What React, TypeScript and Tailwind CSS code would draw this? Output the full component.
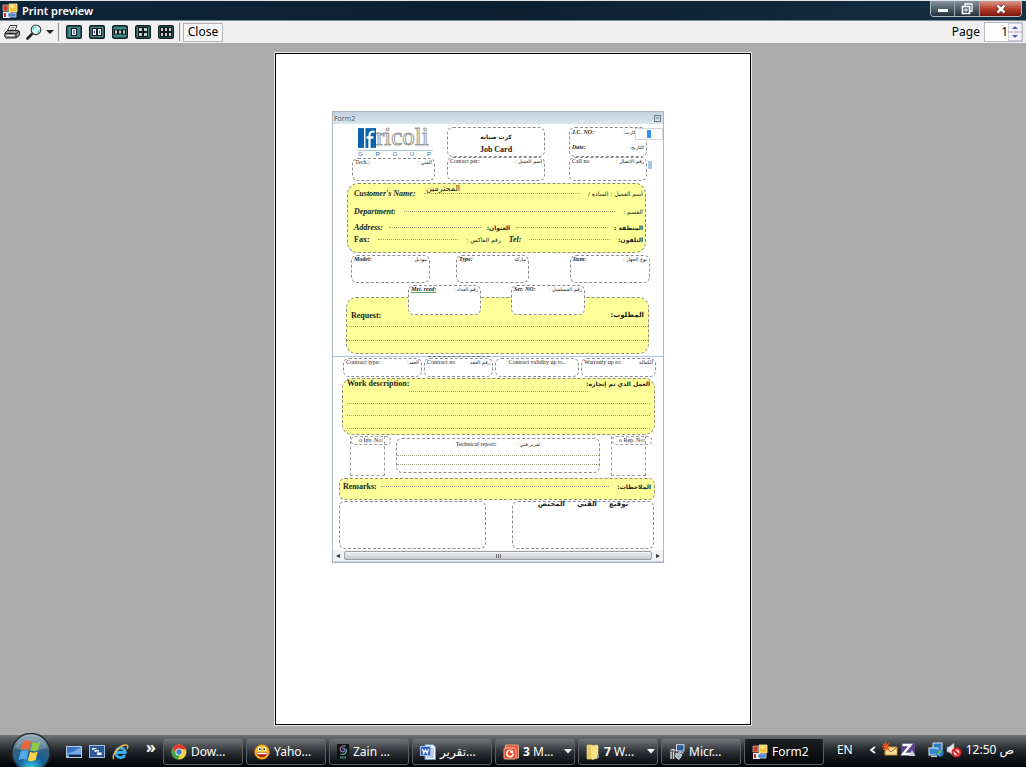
import { ReactNode } from "react";

const ARABIC = "font-['DejaVu_Sans',sans-serif]";

function Ar({ children, className = "" }: { children: ReactNode; className?: string }) {
  return (
    <span dir="rtl" lang="ar" className={`${ARABIC} whitespace-nowrap ${className}`}>
      {children}
    </span>
  );
}

function Dots() {
  return <span className="h-0 min-w-0 flex-1 border-t border-dotted border-[#a3a384]" />;
}

function Box({ children, className = "" }: { children?: ReactNode; className?: string }) {
  return <div className={`rounded-md border border-dashed border-[#8c8c8c] ${className}`}>{children}</div>;
}

function Field({ label, arabic, className = "", text = "" }: { label: string; arabic: string; className?: string; text?: string }) {
  return (
    <Box className={className}>
      <div className="flex justify-between px-0.5 text-[6px] leading-[7px]">
        <span className={`whitespace-nowrap ${text}`}>{label}</span>
        <Ar className="text-[5px]">{arabic}</Ar>
      </div>
    </Box>
  );
}

function FormsIcon() {
  return (
    <svg viewBox="0 0 16 16" className="h-4 w-4 shrink-0" aria-hidden="true">
      <path d="M1 9h7v6H1z" fill="#e9eef5" />
      <path d="M1 2h5v6H1z" fill="#c63d1d" stroke="#f0d8c8" strokeWidth=".6" />
      <path d="M7 1h8v8H7z" fill="#f6c33c" stroke="#fff0b5" strokeWidth=".8" />
      <path d="M8.500 2.500h4v2h-4z" fill="#fff0a5" />
      <path d="M2 10h2v4H2z" fill="#b93427" />
      <path d="M6 10h8v4H6z" fill="#5482cf" stroke="#c9dcf9" strokeWidth=".8" />
    </svg>
  );
}

function PagesIcon({ cols, rows, wide }: { cols: number; rows: number; wide?: boolean }) {
  const cells: ReactNode[] = [];
  const w = cols === 1 ? 5 : cols === 2 ? 4 : 3;
  const h = rows === 2 ? 4 : wide ? 7 : 4;
  const step = w + 1;
  const x0 = 8 - (cols * step - 1) / 2;
  const y0 = 7 - (rows * (h + 1) - 1) / 2;
  for (let r = 0; r < rows; r++)
    for (let c = 0; c < cols; c++) {
      const x = x0 + c * step;
      const y = y0 + r * (h + 1);
      cells.push(
        <g key={`${r}-${c}`}>
          <rect x={x} y={y} width={w} height={h} fill={wide ? "#f6f3ff" : "#c9cfcb"} stroke="#141c20" strokeWidth="1" />
          {wide && <path d={`M${x + w / 2} ${y + 2}v3`} stroke="#5a49a8" strokeWidth="1" />}
          {cols === 1 && <path d={`M${x + 1.5} ${y + 2}h2M${x + 1.5} ${y + 5}h2`} stroke="#5a49a8" strokeWidth=".8" />}
        </g>
      );
    }
  return (
    <svg viewBox="0 0 16 14" className="h-[14px] w-4" aria-hidden="true">
      <rect x=".7" y=".7" width="14.600" height="12.600" rx="1.500" fill="#3c8784" stroke="#101a1c" strokeWidth="1.400" />
      {cells}
    </svg>
  );
}

function PrinterIcon() {
  return (
    <svg viewBox="0 0 16 16" className="h-4 w-4" aria-hidden="true">
      <path d="M6 1.500h7L11 7H3.500z" fill="#fff" stroke="#333" />
      <path d="M6.500 3.500h4M5.800 5.200h4" stroke="#666" strokeWidth=".8" />
      <path d="M1 9l2.500-2.500H14l1.500 1V11l-3 3H1.800L.8 12.500z" fill="#8f8f8f" stroke="#222" />
      <path d="M1 9.500h11l3-2.500M12 9.500V14" stroke="#222" fill="none" />
      <path d="M2.500 11.500h8" stroke="#fff" />
      <path d="M9 8h3" stroke="#e2d34c" />
    </svg>
  );
}

function MagnifierIcon() {
  return (
    <svg viewBox="0 0 16 16" className="h-4 w-4" aria-hidden="true">
      <path d="M6.500 9.500L1.500 14.500" stroke="#222" strokeWidth="2.600" strokeLinecap="round" />
      <circle cx="10" cy="5.800" r="4.800" fill="#d7fafa" stroke="#333" strokeWidth="1.100" />
      <path d="M7 6a3 3 0 013-3M11 9a3 3 0 002-3" stroke="#2dd6de" strokeWidth="1.200" fill="none" />
    </svg>
  );
}

function ChromeIcon() {
  return (
    <svg viewBox="0 0 16 16" className="h-4 w-4 shrink-0" aria-hidden="true">
      <circle cx="8" cy="8" r="7.500" fill="#f3cf35" />
      <path d="M1.500 4.200A7.500 7.500 0 0115 5.200H8L5 9.500z" fill="#df3a2c" />
      <path d="M1.500 4.200L5 10l4 1-2 4.400A7.500 7.500 0 011.500 4.200z" fill="#3fa648" />
      <circle cx="8" cy="8" r="3.500" fill="#fff" />
      <circle cx="8" cy="8" r="2.700" fill="#3f7ccb" />
    </svg>
  );
}

function SmileyIcon() {
  return (
    <svg viewBox="0 0 16 16" className="h-4 w-4 shrink-0" aria-hidden="true">
      <circle cx="8" cy="8" r="7.300" fill="#fac52c" stroke="#cf7a10" strokeWidth=".8" />
      <ellipse cx="5.500" cy="5" rx="1.700" ry="2.300" fill="#fff" />
      <ellipse cx="10.500" cy="5" rx="1.700" ry="2.300" fill="#fff" />
      <circle cx="5.800" cy="5.200" r=".9" fill="#222" />
      <circle cx="10.200" cy="5.200" r=".9" fill="#222" />
      <path d="M2.500 8.500h11a5.500 5 0 01-11 0z" fill="#b21c16" />
      <path d="M3 8.800h10l-.5 1.500h-9z" fill="#fff" />
    </svg>
  );
}

function ZainIcon() {
  return (
    <svg viewBox="0 0 12 16" className="h-4 w-3 shrink-0" aria-hidden="true">
      <rect width="12" height="16" fill="#101416" />
      <path d="M8.500 2C4 1 2 5 4 7c1 1.500 4 .5 4-1.500S6 4 5.500 5.500" stroke="#8a72a6" fill="none" strokeWidth="1.300" />
      <path d="M3.500 10c4 1.500 7-2 5.500-5" stroke="#54a69b" fill="none" strokeWidth="1.300" />
      <path d="M3 13.500h6" stroke="#49a08f" strokeDasharray="1.200 .5" strokeWidth="1.800" />
    </svg>
  );
}

function WordIcon() {
  return (
    <svg viewBox="0 0 16 16" className="h-4 w-4 shrink-0" aria-hidden="true">
      <path d="M5 .5h8l2.500 2.500v12.500H5z" fill="#f4f8ff" stroke="#6d93cf" />
      <path d="M11 5h3M11 7h3M11 9h3M7 11h7M7 13h7" stroke="#7fa3dc" />
      <rect x=".5" y="2.500" width="10" height="9" fill="#2c5fb5" stroke="#9dbdea" />
      <path d="M2.500 5l1.300 4.200L5.500 6l1.700 3.200L8.500 5" stroke="#fff" strokeWidth="1.300" fill="none" />
    </svg>
  );
}

function PptIcon() {
  return (
    <svg viewBox="0 0 16 16" className="h-4 w-4 shrink-0" aria-hidden="true">
      <path d="M2.500 1h13v13h-3V4h-10z" fill="#e95128" stroke="#ffc4aa" strokeWidth=".7" />
      <rect x="1" y="4" width="12" height="11" rx="1" fill="#e7492a" stroke="#ffd1bd" strokeWidth=".8" />
      <circle cx="7" cy="9.500" r="3.200" fill="none" stroke="#fff" strokeWidth="1.500" />
      <path d="M7 9.500V6h3.500v3.500z" fill="#fff" stroke="#e7492a" strokeWidth=".7" />
    </svg>
  );
}

function FolderIcon() {
  return (
    <svg viewBox="0 0 14 16" className="h-4 w-3.5 shrink-0" aria-hidden="true">
      <path d="M1 1h5l1 1.500V15H1z" fill="#e7c85c" stroke="#fae99d" strokeWidth=".6" />
      <path d="M5 2l6-1 1 1v12l-6 1.500z" fill="#f7df82" stroke="#fff0ad" strokeWidth=".6" />
      <path d="M11 11h2v3h-2z" fill="#67a0c9" />
    </svg>
  );
}

function StudioIcon() {
  return (
    <svg viewBox="0 0 16 16" className="h-4 w-4 shrink-0" aria-hidden="true">
      <rect x="7.500" y=".7" width="7.500" height="6.300" fill="#2c5c99" stroke="#d5dce4" />
      <path d="M9 8.800h5.500M11.200 7v2" stroke="#bcc5cf" strokeWidth="1.200" />
      <path d="M.8 6.500C2 4.500 5 4 7 6.500L5.500 7.500 4 6.500z" fill="#c9cdd0" />
      <path d="M2 7.500v7.500M4.500 7.500V15" stroke="#d5d8da" strokeWidth="1.500" />
      <path d="M7 9l6 2-3 4.500-3.500-2.500z" fill="#93b4c4" stroke="#e2e6e9" strokeWidth=".9" />
    </svg>
  );
}

function DesktopIcon() {
  return (
    <svg viewBox="0 0 16 16" className="h-4 w-4" aria-hidden="true">
      <rect x=".5" y="2.500" width="15" height="11" fill="#3a75c6" stroke="#b9cbe0" />
      <path d="M1 9C6 9 10 6 15 3v7H1z" fill="#79a8df" />
      <path d="M1 12h14" stroke="#17253a" strokeWidth="2" />
      <path d="M1 12h2" stroke="#4fb4e4" strokeWidth="2" />
    </svg>
  );
}

function SwitcherIcon() {
  return (
    <svg viewBox="0 0 16 16" className="h-4 w-4" aria-hidden="true">
      <rect x=".5" y="1.500" width="15" height="12" fill="#2b599a" stroke="#9ebbe0" />
      <path d="M2.500 3.500h5.500v3H2.500z" fill="#dce9f8" stroke="#1b3c70" strokeWidth=".7" />
      <path d="M5 5.500h5.500v3H5z" fill="#dce9f8" stroke="#1b3c70" strokeWidth=".7" />
      <path d="M7.500 8h5.500v3.500H7.500z" fill="#f3f8fe" stroke="#1b3c70" strokeWidth=".7" />
    </svg>
  );
}

function ExplorerIcon() {
  return (
    <svg viewBox="0 0 17 16" className="h-4 w-[17px]" aria-hidden="true">
      <path d="M12.800 11A4.800 4.800 0 1113.300 8.500H4.500" fill="none" stroke="#3aaef0" strokeWidth="2.800" />
      <path d="M2 15C-1 12 6 2 13 1c4-.5 3 2.500 2 4" fill="none" stroke="#f0c244" strokeWidth="1.300" />
    </svg>
  );
}

function StartOrb() {
  return (
    <svg viewBox="0 0 42 34" className="h-[34px] w-[42px]" aria-hidden="true">
      <defs>
        <radialGradient id="orb" cx=".5" cy=".9" r=".85">
          <stop offset="0" stopColor="#35c6ef" />
          <stop offset=".4" stopColor="#165d91" />
          <stop offset=".75" stopColor="#3b647f" />
          <stop offset="1" stopColor="#9fb3c0" />
        </radialGradient>
      </defs>
      <circle cx="21" cy="19.500" r="19" fill="url(#orb)" stroke="#202a32" strokeWidth="1.500" />
      <path d="M5 15a16.500 13 0 0132 0c-10 4-22 4-32 0z" fill="#fff" opacity=".22" />
      <path d="M13 9c3-2 5-2 8-.5L19 17c-3-1.500-5-1.300-8 .2z" fill="#ee6335" />
      <path d="M22.500 9c3 1.300 5 1.200 8-.4L28 17c-3 1.600-5 1.500-7.700.3z" fill="#91c945" />
      <path d="M10.500 18.500c3-1.500 5-1.500 8-.2L16.500 27c-3-1.500-5-1.500-8 .2z" fill="#55a9e5" />
      <path d="M20 18.700c3 1.300 5 1.300 7.800-.2L25.500 27c-3 1.500-5 1.500-7.700.2z" fill="#fcd044" />
    </svg>
  );
}

function Task({ icon, label, active, menu, count }: { icon: ReactNode; label: string; active?: boolean; menu?: boolean; count?: string }) {
  return (
    <button
      className={`flex h-[27px] w-20 items-center gap-1 rounded-[3px] border pl-[7px] text-left text-[12px] text-white ${
        active
          ? "border-[#5c5e60] bg-linear-to-b from-[#1c1e20] to-[#050607]"
          : "border-[#5e6164] bg-linear-to-b from-[#73777a] via-[#303438] via-50% to-[#080c10]"
      }`}
    >
      {icon}
      <span className="min-w-0 flex-1 whitespace-nowrap">
        {count && <b>{count} </b>}
        {label}
      </span>
      {menu && (
        <svg viewBox="0 0 8 5" className="mr-0.5 h-[5px] w-2 shrink-0" aria-hidden="true">
          <path d="M0 0h8L4 4.500z" fill="#fff" />
        </svg>
      )}
    </button>
  );
}

function TitleBar() {
  return (
    <header className="flex h-[21px] items-start border-t border-b border-t-[#dfe5ea] border-b-[#7d8b95] bg-linear-to-r from-[#0e2439] via-[#0c2032] to-[#152f42] pr-1 pl-0.5">
      <div className="flex h-[19px] items-center gap-1">
        <FormsIcon />
        <h1 className="text-[11px] leading-[18px] font-semibold text-white">Print preview</h1>
      </div>
      <div className="ml-auto flex h-4 overflow-hidden rounded-b border border-t-0 border-[#aebac4]">
        <button aria-label="Minimize" className="flex w-6 items-end justify-center border-r border-[#9aa7b2] bg-linear-to-b from-[#8793a0] to-[#25313e] pb-1">
          <span className="h-[3px] w-2.5 bg-white" />
        </button>
        <button aria-label="Restore" className="flex w-[25px] items-center justify-center border-r border-[#9aa7b2] bg-linear-to-b from-[#8793a0] to-[#25313e]">
          <svg viewBox="0 0 12 12" className="h-3 w-3" aria-hidden="true">
            <path d="M4 3V1h7v7H9" fill="none" stroke="#fff" strokeWidth="1.300" />
            <path d="M1.500 3.500h7v7h-7z" fill="none" stroke="#fff" strokeWidth="1.700" />
            <path d="M4 6h2v2H4z" fill="none" stroke="#fff" />
          </svg>
        </button>
        <button aria-label="Close window" className="flex w-[41px] items-center justify-center bg-linear-to-b from-[#d5988c] via-[#b8402f] to-[#7a160c]">
          <svg viewBox="0 0 12 10" className="h-2.5 w-3" aria-hidden="true">
            <path d="M2.500 1.500l7 7M9.500 1.500l-7 7" stroke="#50201b" strokeWidth="4" />
            <path d="M2.500 1.500l7 7M9.500 1.500l-7 7" stroke="#fff" strokeWidth="2.500" />
          </svg>
        </button>
      </div>
    </header>
  );
}

function Toolbar() {
  return (
    <div role="toolbar" className="flex h-[22px] items-center bg-[#f0f0f0] pr-[3px] pl-1 text-[12px] text-black">
      <button aria-label="Print"><PrinterIcon /></button>
      <button aria-label="Zoom" className="ml-1.5 flex items-center gap-1">
        <MagnifierIcon />
        <svg viewBox="0 0 8 4" className="h-1 w-2" aria-hidden="true"><path d="M0 0h8L4 4z" fill="#222" /></svg>
      </button>
      <span className="mr-[7px] ml-1 h-[18px] w-px bg-[#8a8a8a]" />
      <div className="flex gap-[7px]">
        <button aria-label="One page"><PagesIcon cols={1} rows={1} wide /></button>
        <button aria-label="Two pages"><PagesIcon cols={2} rows={1} wide /></button>
        <button aria-label="Three pages"><PagesIcon cols={3} rows={1} /></button>
        <button aria-label="Four pages"><PagesIcon cols={2} rows={2} /></button>
        <button aria-label="Six pages"><PagesIcon cols={3} rows={2} /></button>
      </div>
      <span className="mr-[3px] ml-[5px] h-[18px] w-px bg-[#8a8a8a]" />
      <button className="h-[19px] w-10 border border-[#b4b4b4] bg-[#f7f7f7] leading-4">Close</button>
      <label htmlFor="page" className="ml-auto">Page</label>
      <div className="ml-1 flex h-5 w-[39px] border border-[#b5bac4] bg-white">
        <input id="page" defaultValue="1" className="w-[23px] min-w-0 bg-white text-right outline-none" />
        <div className="flex flex-1 flex-col">
          <button aria-label="Next page" className="flex flex-1 items-center justify-center border border-[#cdd0d5] bg-[#f5f5f7]">
            <svg viewBox="0 0 6 3" className="h-[3px] w-1.5" aria-hidden="true"><path d="M0 3h6L3 0z" fill="#4866b5" /></svg>
          </button>
          <button aria-label="Previous page" className="flex flex-1 items-center justify-center border border-[#cdd0d5] bg-[#f5f5f7]">
            <svg viewBox="0 0 6 3" className="h-[3px] w-1.5" aria-hidden="true"><path d="M0 0h6L3 3z" fill="#4866b5" /></svg>
          </button>
        </div>
      </div>
    </div>
  );
}

function Logo() {
  return (
    <div className="w-[75px]">
      <div className="flex h-6 items-start border-b border-[#a9c6e2]">
        <svg viewBox="0 0 18 20" className="h-[22px] w-[18px] shrink-0" preserveAspectRatio="none" aria-hidden="true">
          <path d="M0 1h6v18H0z" fill="#0a62ad" />
          <path d="M7.500 1H18v18H7.500z" fill="#0a62ad" />
          <path d="M16.500 4.500c-3.500-1-5 .3-5 3.500v11M8.500 9.500h7" stroke="#fff" strokeWidth="2.200" fill="none" />
        </svg>
        <span className="font-['Liberation_Serif',serif] text-[25px] leading-[20px] text-white [-webkit-text-stroke:1px_#9a9a9a]">ricoli</span>
      </div>
      <div className="flex justify-between pr-0.5 font-['Liberation_Sans',sans-serif] text-[6px] leading-[7px] text-[#2c6ca8]">
        <span>G</span><span>R</span><span>O</span><span>U</span><span>P</span>
      </div>
    </div>
  );
}

function Report() {
  return (
    <section className="w-[332px] border border-[#aab6c2] bg-white font-['Liberation_Serif',serif] text-[8px] leading-[9px] text-[#222]">
      <div className="flex h-3 items-center justify-between bg-linear-to-b from-[#c2d0df] to-[#dbe5f0] pr-0.5 pl-px font-['Open_Sans',sans-serif] text-[7px] text-[#4b5663]">
        <span>Form2</span>
        <button aria-label="Close form" className="flex h-[7px] w-[7px] items-center justify-center border border-[#6c7684] text-[6px] leading-none">×</button>
      </div>

      <div className="mt-[3px] flex h-[30px] pl-[25px]">
        <Logo />
        <Box className="ml-3.5 flex h-[30px] w-[98px] flex-col items-center gap-1 pt-1 font-bold">
          <Ar className="text-[6px]">كرت صيانة</Ar>
          <span>Job Card</span>
        </Box>
        <Box className="relative ml-6 flex h-[30px] w-[78px] flex-col gap-2 px-0.5 pt-px text-[6px] leading-[7px] font-bold italic">
          <div className="flex justify-between"><span>J.C. NO:</span><Ar className="mr-2 text-[5px] font-normal not-italic">كارت:</Ar></div>
          <div className="flex justify-between"><span>Date:</span><Ar className="text-[5px] font-normal not-italic">التاريخ:</Ar></div>
          <span className="absolute top-0 left-[65px] flex h-3 w-[28px] items-center justify-center border border-[#d3d8df] bg-white">
            <span className="h-2 w-1 bg-[#3391f5]" />
          </span>
        </Box>
      </div>

      <div className="flex pl-[19px]">
        <Field label="Tech.:" arabic="الفني :" className="mt-px h-[23px] w-[83px]" />
        <Field label="Contact per:" arabic="اسم العميل :" className="ml-3 h-6 w-[98px]" />
        <Field label="Call no" arabic="رقم الاتصال :" className="ml-6 h-6 w-[78px]" />
        <span className="mt-1 ml-px h-2 w-1 bg-[#a5c8ef]" />
      </div>

      <div className="mt-0.5 mr-[17px] ml-3.5 flex h-[70px] flex-col rounded-[11px] border border-dashed border-[#8c8c8c] bg-[#ffff99] pr-0.5 pl-1.5 font-bold">
        <div className="relative flex h-[18px] items-center gap-2">
          <i>Customer&apos;s Name:</i><Dots /><Ar className="text-[6px] font-normal">اسم العميل : السادة /</Ar>
          <Ar className="absolute top-0 left-[72px] text-[8px] font-normal">المحترمين</Ar>
        </div>
        <div className="flex h-[18px] items-center gap-2"><i>Department:</i><Dots /><Ar className="text-[6px] font-normal">القسم :</Ar></div>
        <div className="flex h-[15px] items-center gap-1.5"><i>Address:</i><Dots /><Ar className="text-[6px]">العنوان:</Ar><Dots /><Ar className="text-[6px]">المنطقة :</Ar></div>
        <div className="flex h-2 items-center gap-2"><span>Fax:</span><Dots /><Ar className="text-[6px] font-normal">رقم الفاكس :</Ar><i>Tel:</i><Dots /><Ar className="text-[6px]">التلفون:</Ar></div>
      </div>

      <div className="mt-0.5 flex pl-[18px]">
        <Field label="Model:" arabic="موديل :" className="h-7 w-[79px]" text="font-bold italic" />
        <Field label="Type:" arabic="ماركة" className="ml-[26px] h-7 w-[73px]" text="font-bold italic" />
        <Field label="Item:" arabic="نوع الجهاز :" className="ml-[41px] h-7 w-20" text="font-bold italic" />
      </div>

      <div className="relative z-10 mt-0.5 flex pl-[75px]">
        <Field label="Met. reed:" arabic="رقم العداد :" className="h-[30px] w-[73px] bg-white" text="font-bold italic underline decoration-[#5aa05a]" />
        <Field label="Ser. NO:" arabic="رقم المسلسل :" className="ml-[30px] h-[30px] w-[74px] bg-white" text="font-bold italic" />
      </div>

      <div className="mt-[-18px] mr-3.5 ml-[13px] h-[57px] rounded-[10px] border border-dashed border-[#8c8c8c] bg-[#ffff99] font-bold">
        <div className="flex h-7 items-end justify-between px-1 pb-1.5"><span>Request:</span><Ar className="text-[7px]">المطلوب:</Ar></div>
        <div className="flex"><Dots /></div>
        <div className="mt-[13px] flex"><Dots /></div>
      </div>

      <div className="mt-0.5 flex h-px bg-[#a9c4e6]"><span className="ml-[95px] w-[62px] border-t border-dashed border-[#626b76]" /></div>

      <div className="mt-px flex gap-0.5 pl-2.5">
        <Field label="Contract type:" arabic="العقد:" className="h-[19px] w-[79px]" />
        <Field label="Contract no" arabic="رقم العقد" className="h-[19px] w-[69px]" />
        <Box className="h-[19px] w-[84px] text-center text-[6px] leading-[7px]">Contract validity up to..</Box>
        <Field label="Warranty up to:" arabic="الكفالة" className="h-[19px] w-[75px]" />
      </div>

      <div className="mt-px mr-2 ml-[9px] h-[57px] rounded-[10px] border border-dashed border-[#8c8c8c] bg-[#ffff99] px-1 font-bold">
        <div className="flex justify-between"><span>Work description:</span><Ar className="text-[6px]">العمل الذي تم إنجازه:</Ar></div>
        <div className="mt-[3px] mr-[62px] ml-[62px] flex"><Dots /></div>
        <div className="mt-[11px] flex"><Dots /></div>
        <div className="mt-[11px] flex"><Dots /></div>
        <div className="mt-3 flex"><Dots /></div>
      </div>

      <div className="mt-px flex h-[42px] pb-0.5 pl-[17px] text-[6px] leading-[7px]">
        <div className="w-[35px] border border-t-0 border-dashed border-[#a0a0a0]">
          <div className="w-10 rounded border border-dashed border-[#a0a0a0] text-center whitespace-nowrap">o Inv. No:</div>
        </div>
        <Box className="mt-0.5 ml-[11px] h-[35px] w-[204px]">
          <div className="flex h-4 items-start justify-center gap-5 pt-0.5"><span>Technical report:</span><Ar className="text-[5px]">تقرير فني :</Ar></div>
          <div className="flex"><Dots /></div>
          <div className="mt-2 flex"><Dots /></div>
        </Box>
        <div className="ml-[11px] w-[35px] border border-t-0 border-dashed border-[#a0a0a0]">
          <div className="w-10 rounded border border-dashed border-[#a0a0a0] text-center whitespace-nowrap">o Rep. No:</div>
        </div>
      </div>

      <div className="mr-2 ml-1.5 flex h-[22px] items-start gap-1 rounded-md border border-dashed border-[#8c8c8c] bg-[#ffff99] px-[3px] pt-[3px] font-bold">
        <span>Remarks:</span><span className="flex flex-1 pt-1"><Dots /></span><Ar className="ml-1 text-[6px]">الملاحظات:</Ar>
      </div>

      <div className="mt-px mr-[9px] ml-1.5 flex justify-between">
        <Box className="h-12 w-[147px] rounded-[10px]" />
        <Box className="flex h-12 w-[142px] justify-center rounded-[10px]">
          <Ar className="flex gap-3 text-[7px] leading-[5px] font-bold"><span>توقيع</span><span>الفني</span><span>المختص</span></Ar>
        </Box>
      </div>

      <div className="mt-px flex h-[11px] items-center bg-[#f0f1f3] px-[3px]">
        <button aria-label="Scroll left" className="w-2"><svg viewBox="0 0 4 4" className="h-1 w-1" aria-hidden="true"><path d="M4 0v4L0 2z" fill="#333" /></svg></button>
        <div className="flex h-[9px] flex-1 items-center justify-center gap-px rounded-xs border border-[#9da1a6] bg-linear-to-b from-[#f3f3f4] to-[#c6c8cb]">
          <span className="h-1 w-px bg-[#666]" /><span className="h-1 w-px bg-[#666]" /><span className="h-1 w-px bg-[#666]" />
        </div>
        <button aria-label="Scroll right" className="flex w-2 justify-end"><svg viewBox="0 0 4 4" className="h-1 w-1" aria-hidden="true"><path d="M0 0v4l4-2z" fill="#333" /></svg></button>
      </div>
      <div className="h-px bg-[#cbd5e0]" />
    </section>
  );
}

function Tray() {
  return (
    <div className="ml-auto flex h-full items-center pr-3 pb-1 text-[12px]">
      <span>EN</span>
      <button aria-label="Show hidden icons" className="ml-4">
        <svg viewBox="0 0 7 8" className="h-2 w-[7px]" aria-hidden="true"><path d="M6 1L2 4l4 3" stroke="#fff" strokeWidth="1.700" fill="none" /></svg>
      </button>
      <svg viewBox="0 0 16 16" className="ml-1.5 h-4 w-4" aria-hidden="true">
        <path d="M3 5h12v8H3z" fill="#f7dd97" stroke="#c98c31" /><path d="M3 5l6 5 6-5" stroke="#a8652b" fill="none" />
        <path d="M4 0v9M0 4.500h8M1 1.500l6 6M7 1.500l-6 6" stroke="#ed5a20" strokeWidth="1.200" />
      </svg>
      <svg viewBox="0 0 16 16" className="ml-0.5 h-4 w-4" aria-hidden="true">
        <rect x="1" y="1" width="14" height="13" fill="#59438b" /><path d="M2.500 3h8l-7.500 9h9" stroke="#fff" strokeWidth="2.300" fill="none" /><path d="M12 8l3.500 6h-7z" fill="#c8ced4" />
      </svg>
      <svg viewBox="0 0 16 16" className="ml-3 h-4 w-4" aria-hidden="true">
        <rect x="5" y="1" width="9" height="7" fill="#2d7ac7" stroke="#d5e5f3" /><rect x="1" y="6" width="9" height="7" fill="#3187d2" stroke="#d5e5f3" />
        <path d="M3 14.500h6" stroke="#ccd9e6" /><circle cx="12" cy="11" r="3.700" fill="#2374cf" /><path d="M10 9l3-1 1 2-2 1v3l-3-2z" fill="#62bd4c" />
      </svg>
      <svg viewBox="0 0 16 16" className="ml-0.5 h-4 w-4" aria-hidden="true">
        <path d="M1 5h2l5-4v13l-5-4H1z" fill="#e6e9ec" stroke="#8d969e" strokeWidth=".7" />
        <circle cx="10.500" cy="10.500" r="4" fill="#f3cbc8" stroke="#d62720" strokeWidth="2" /><path d="M8 8l5 5" stroke="#d62720" strokeWidth="2" />
      </svg>
      <span className="ml-1 whitespace-nowrap">12:50 <span lang="ar" className={ARABIC}>ص</span></span>
    </div>
  );
}

export default function App() {
  return (
    <div className="flex min-h-screen flex-col bg-[#ababab] font-['Noto_Sans','DejaVu_Sans',sans-serif]">
      <TitleBar />
      <Toolbar />
      <main className="flex flex-1 justify-center pt-[9px] pb-[9px]">
        <div className="flex w-[478px] border border-[#e8e8e8] bg-black p-px">
          <div className="flex-1 bg-white pt-[57px] pl-14 outline-1 outline-black">
            <Report />
          </div>
        </div>
      </main>
      <footer className="flex h-8 items-center border-t border-[#6c7073] bg-linear-to-b from-[#6a6e71] via-[#24282c] via-45% to-[#020407] text-white">
        <button aria-label="Start" className="-mt-1 ml-2.5 shrink-0"><StartOrb /></button>
        <nav aria-label="Quick launch" className="ml-3.5 flex items-center gap-[7px]">
          <button aria-label="Show desktop"><DesktopIcon /></button>
          <button aria-label="Switch windows"><SwitcherIcon /></button>
          <button aria-label="Internet browser"><ExplorerIcon /></button>
        </nav>
        <button aria-label="More shortcuts" className="mr-1.5 ml-4 w-3 pb-2.5 text-[16px] leading-4 font-bold">»</button>
        <div className="flex gap-[3px]">
          <Task icon={<ChromeIcon />} label="Dow..." />
          <Task icon={<SmileyIcon />} label="Yaho..." />
          <Task icon={<ZainIcon />} label="Zain ..." />
          <Task icon={<WordIcon />} label="تقرير..." />
          <Task icon={<PptIcon />} count="3" label="M..." menu />
          <Task icon={<FolderIcon />} count="7" label="W..." menu />
          <Task icon={<StudioIcon />} label="Micr..." />
          <Task icon={<FormsIcon />} label="Form2" active />
        </div>
        <Tray />
      </footer>
    </div>
  );
}
